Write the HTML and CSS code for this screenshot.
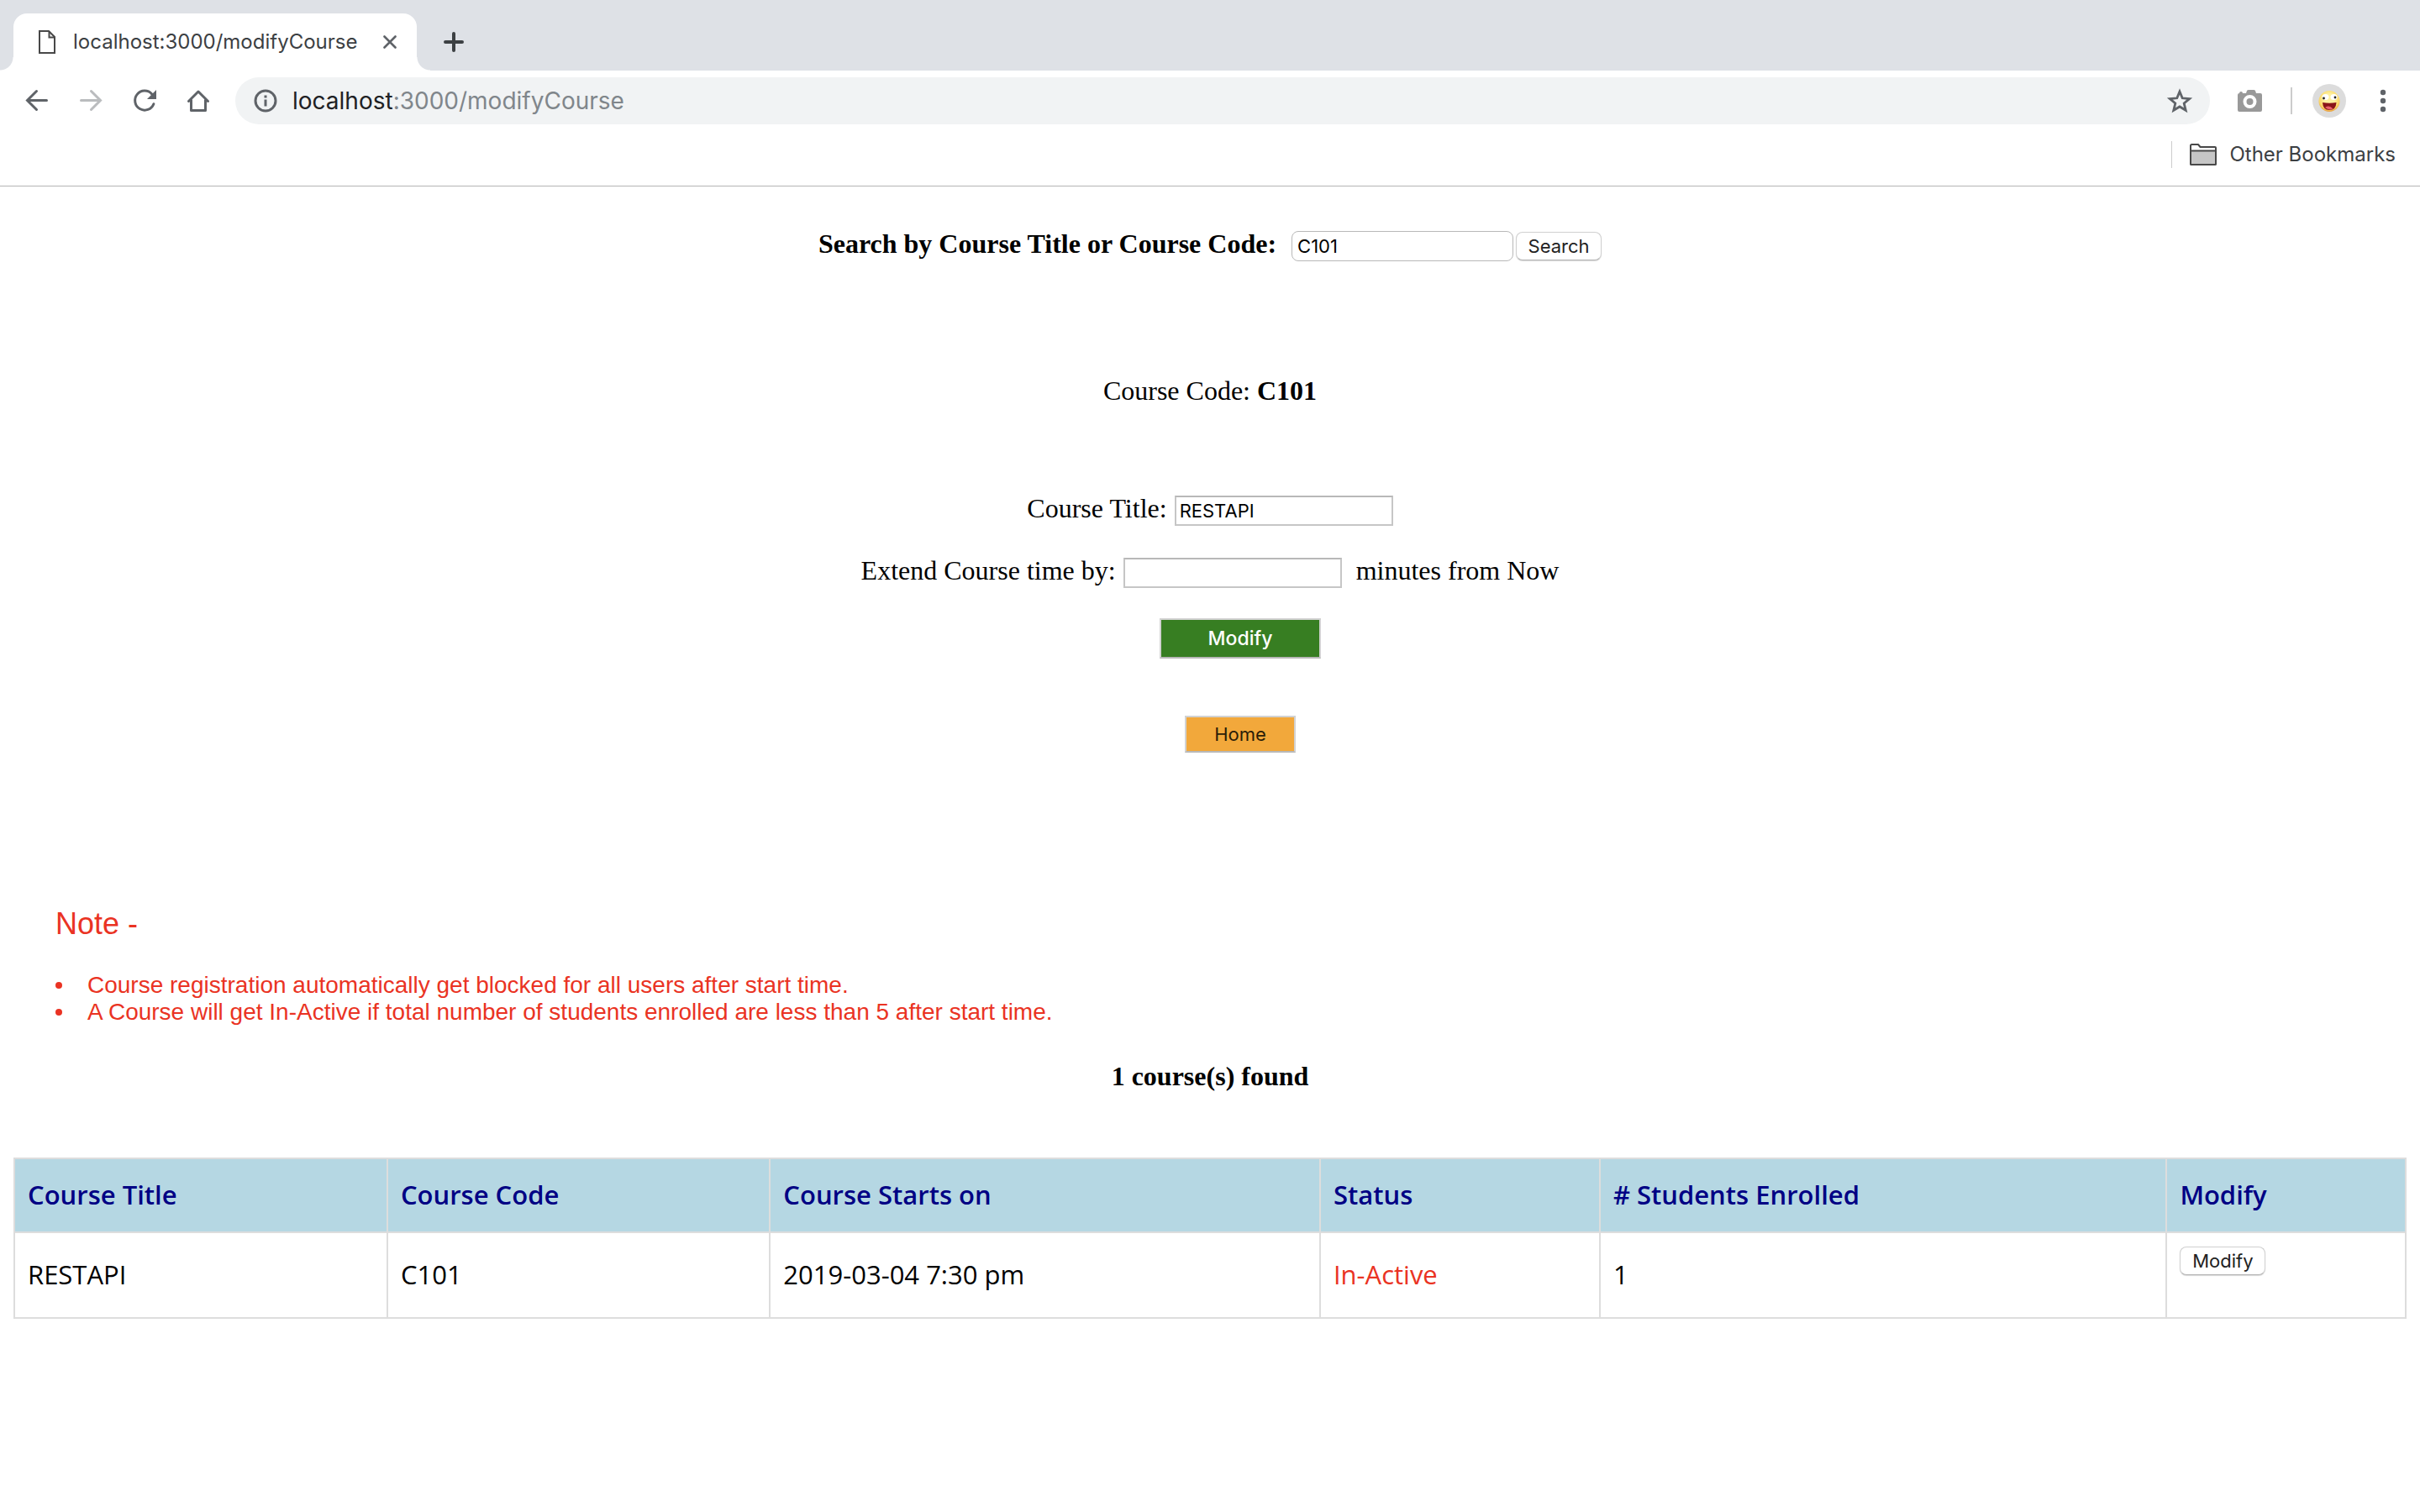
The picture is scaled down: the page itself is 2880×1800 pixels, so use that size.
FILE: index.html
```html
<!DOCTYPE html>
<html lang="en">
<head>
<meta charset="utf-8">
<meta name="viewport" content="width=device-width, initial-scale=1">
<title>localhost:3000/modifyCourse</title>
<link rel="stylesheet" href="styles.css">
</head>
<body>
<header class="browser">
  <div class="tab-strip">
    <div class="tab">
      <svg class="tab-icon" width="20" height="28" viewBox="0 0 20 28" fill="none" stroke="#484848" stroke-width="2"><path d="M1 1h11l7 7v19H1z"/><path d="M12.500 1v7.500H19"/></svg>
      <span class="tab-title">localhost:3000/modifyCourse</span>
      <button class="icon-button tab-close" aria-label="Close tab"><svg width="16" height="16" viewBox="0 0 16 16" stroke="#5f6368" stroke-width="2.600" stroke-linecap="round"><path d="M1.500 1.500l13 13M14.500 1.500l-13 13"/></svg></button>
    </div>
    <button class="icon-button new-tab" aria-label="New tab"><svg width="24" height="24" viewBox="0 0 24 24" stroke="#3c4043" stroke-width="4" stroke-linecap="round"><path d="M12 2v20M2 12h20"/></svg></button>
  </div>
  <nav class="toolbar">
    <button class="icon-button nav-button" aria-label="Back"><svg width="32" height="32" viewBox="0 0 32 32" fill="none" stroke="#5f6368" stroke-width="3" stroke-linecap="round"><path d="M27.500 15.500H5M15.500 4.500l-11 11 11 11"/></svg></button>
    <button class="icon-button nav-button" aria-label="Forward"><svg width="32" height="32" viewBox="0 0 32 32" fill="none" stroke="#babcbe" stroke-width="3" stroke-linecap="round"><path d="M4.500 15.500H27M16.500 4.500l11 11-11 11"/></svg></button>
    <button class="icon-button nav-button" aria-label="Reload"><svg width="32" height="32" viewBox="0 0 32 32"><path d="M26.900 19.700A11.500 11.500 0 1 1 24.700 7.900" fill="none" stroke="#5f6368" stroke-width="3" stroke-linecap="round"/><path d="M30 3v11H19z" fill="#5f6368"/></svg></button>
    <button class="icon-button nav-button" aria-label="Home page"><svg width="32" height="32" viewBox="0 0 32 32" fill="none" stroke="#5f6368" stroke-width="3" stroke-linecap="round" stroke-linejoin="round"><path d="M4.500 16.500L16 5l11.500 11.500M7.500 15v12.500h17V15"/></svg></button>
    <div class="address">
      <svg width="28" height="28" viewBox="0 0 28 28"><circle cx="14" cy="14" r="12" fill="none" stroke="#5f6368" stroke-width="3"/><path d="M12.500 7.500h3v3h-3zM12.500 12.500h3v8h-3z" fill="#5f6368"/></svg>
      <div class="url" role="textbox" aria-label="Address"><span class="url-host">localhost</span>:3000/modifyCourse</div>
      <button class="icon-button" aria-label="Bookmark this page"><svg width="32" height="32" viewBox="0 0 32 32" fill="none" stroke="#5f6368" stroke-width="2.800"><path d="M16 5l3.200 7.800 8.500.700-6.500 5.500 2 8.300L16 23l-7.200 4.300 2-8.300-6.500-5.500 8.500-.700z"/></svg></button>
    </div>
    <button class="icon-button camera" aria-label="Screenshot"><svg width="32" height="32" viewBox="0 0 32 32"><path d="M3 7q0-2 2-2t2 2h4l1-3q.500-1 2-1h6q1.500 0 2 1l1 3h5q2 0 2 2v18q0 2-2 2H3q-2 0-2-2V9q0-2 2-2z" fill="#999"/><circle cx="15.500" cy="17" r="6" fill="none" stroke="#fff" stroke-width="4"/></svg></button>
    <span class="divider"></span>
    <button class="icon-button avatar" aria-label="Profile"><svg width="40" height="40" viewBox="0 0 40 40"><defs><radialGradient id="face" cx=".5" cy=".4" r=".6"><stop offset=".4" stop-color="#fdf0a0"/><stop offset=".8" stop-color="#fbd869"/><stop offset="1" stop-color="#e89a3c"/></radialGradient></defs><circle cx="20" cy="20" r="20" fill="#dcdcdc"/><circle cx="20" cy="20.500" r="12.500" fill="url(#face)"/><ellipse cx="15.500" cy="15.500" rx="4" ry="3.500" fill="#fff"/><ellipse cx="25.500" cy="15.500" rx="4" ry="3.500" fill="#fff"/><circle cx="13.500" cy="17" r="1.400" fill="#222"/><circle cx="27" cy="16" r="1.400" fill="#222"/><path d="M12 22q8 1.500 16.500 0-.500 9-8.300 9T12 22z" fill="#8a1518"/><path d="M15 28q5-3.500 9.500 1.500-4.500 2.500-9.500-1.500z" fill="#e8606a"/></svg></button>
    <button class="icon-button" aria-label="Menu"><svg width="32" height="32" viewBox="0 0 32 32" fill="#5f6368"><circle cx="16" cy="6" r="3.200"/><circle cx="16" cy="16" r="3.200"/><circle cx="16" cy="26" r="3.200"/></svg></button>
  </nav>
  <div class="bookmarks">
    <a class="bookmark" href="#bookmarks">
      <svg width="32" height="26" viewBox="0 0 32 26" stroke="#484848" stroke-width="2" stroke-linejoin="round"><path d="M1 24V2.500Q1 1 2.500 1H10l2.500 3H30q1 0 1 1v19q0 1-1 1H2q-1 0-1-1z" fill="#fff"/><path d="M1 8.500h30V24q0 1-1 1H2q-1 0-1-1z" fill="#c6c6c6"/></svg>
      Other Bookmarks
    </a>
  </div>
</header>

<main class="page">
  <form class="row search-row">
    <label class="search-label" for="search">Search by Course Title or Course Code:</label>
    <div class="search-box">
      <input class="field field-rounded" id="search" type="text" value="C101">
      <button class="native-button" type="button">Search</button>
    </div>
  </form>

  <p class="course-code">Course Code: <b>C101</b></p>

  <form class="edit-form">
    <div class="row">
      <label for="title">Course Title:</label>
      <input class="field" id="title" type="text" value="RESTAPI">
    </div>
    <div class="row">
      <label for="extend">Extend Course time by:</label>
      <input class="field" id="extend" type="text">
      <span class="unit">minutes from Now</span>
    </div>
    <div class="actions">
      <button class="action modify" type="button">Modify</button>
      <button class="action home" type="button">Home</button>
    </div>
  </form>

  <section class="note">
    <h2 class="note-title">Note -</h2>
    <ul class="note-list">
      <li>Course registration automatically get blocked for all users after start time.</li>
      <li>A Course will get In-Active if total number of students enrolled are less than 5 after start time.</li>
    </ul>
  </section>

  <p class="found">1 course(s) found</p>

  <table class="courses">
    <colgroup>
      <col class="col-title"><col class="col-code"><col class="col-start"><col class="col-status"><col class="col-enrolled"><col class="col-modify">
    </colgroup>
    <thead>
      <tr><th>Course Title</th><th>Course Code</th><th>Course Starts on</th><th>Status</th><th># Students Enrolled</th><th>Modify</th></tr>
    </thead>
    <tbody>
      <tr><td>RESTAPI</td><td>C101</td><td>2019-03-04 7:30 pm</td><td class="inactive">In-Active</td><td>1</td><td class="modify-cell"><button class="native-button" type="button">Modify</button></td></tr>
    </tbody>
  </table>
</main>
</body>
</html>
```
FILE: styles.css
```css
* {
  box-sizing: border-box;
}

body {
  margin: 0;
  background: #fff;
  color: #000;
  font: 32px/36px "Liberation Serif", "Times New Roman", serif;
}

button,
input {
  margin: 0;
  font: 22px/26px Inter, sans-serif;
}

svg {
  display: block;
}

/* Browser window */

.browser {
  border-bottom: 1px solid #b4b4b4;
  color: #3c4043;
  font: 24px/32px Inter, sans-serif;
}

.icon-button {
  display: flex;
  align-items: center;
  justify-content: center;
  flex: none;
  padding: 0;
  border: 0;
  background: none;
}

.tab-strip {
  display: flex;
  align-items: center;
  height: 84px;
  padding: 16px 16px 0;
  background: #dee1e6;
}

.tab {
  position: relative;
  display: flex;
  align-items: center;
  width: 480px;
  height: 68px;
  padding: 0 24px 0 30px;
  border-radius: 16px 16px 0 0;
  background: #fff;
}

.tab::before,
.tab::after {
  content: "";
  position: absolute;
  bottom: 0;
  width: 16px;
  height: 16px;
}

.tab::before {
  right: 100%;
  background: radial-gradient(circle at 0 0, transparent 15px, #fff 16px);
}

.tab::after {
  left: 100%;
  background: radial-gradient(circle at 100% 0, transparent 15px, #fff 16px);
}

.tab-title {
  margin-left: 21px;
  white-space: nowrap;
}

.tab-close {
  margin-left: auto;
}

.new-tab {
  margin-left: 32px;
}

.toolbar {
  display: flex;
  align-items: center;
  padding: 8px 28px 0 12px;
}

.nav-button {
  width: 64px;
  height: 56px;
}

.address {
  display: flex;
  flex: 1;
  align-items: center;
  gap: 18px;
  height: 56px;
  margin-left: 12px;
  padding: 0 20px 0 22px;
  border-radius: 28px;
  background: #f1f3f4;
}

.url {
  flex: 1;
  color: #80868b;
  font-size: 28px;
}

.url-host {
  color: #202124;
}

.camera {
  margin: 0 32px;
}

.divider {
  width: 2px;
  height: 32px;
  background: #ccc;
}

.avatar {
  margin: 0 28px 0 24px;
}

.bookmarks {
  display: flex;
  justify-content: flex-end;
  padding: 20px 29px 21px;
}

.bookmark {
  display: flex;
  align-items: center;
  gap: 15px;
  padding-left: 21px;
  border-left: 1px solid #ccc;
  color: inherit;
  text-decoration: none;
}

/* Page */

.page {
  padding: 50px 16px 0;
}

.row {
  display: flex;
  align-items: baseline;
  justify-content: center;
  gap: 9px;
  height: 38px;
}

.search-label {
  font-weight: bold;
}

.search-row {
  gap: 18px;
}

.search-box {
  display: flex;
  align-items: baseline;
  gap: 3px;
}

.field {
  width: 260px;
  height: 36px;
  padding: 0 4px;
  border: 2px solid #c6c6c6;
  border-top-color: #b8b8b8;
  background: #fff;
  color: #000;
}

.field-rounded {
  width: 264px;
  padding: 0 6px;
  border-width: 1px;
  border-color: #b8b8b8;
  border-radius: 8px;
}

.native-button {
  width: 102px;
  height: 34px;
  padding: 0;
  border: 1px solid #d0d0d0;
  border-bottom-color: #b4b4b4;
  border-radius: 8px;
  background: #fff;
  box-shadow: 0 1px 1px #d8d8d8;
  color: #222;
}

.course-code {
  margin: 137px 0 104px;
  text-align: center;
}

.edit-form {
  display: flex;
  flex-direction: column;
  gap: 36px;
}

.unit {
  margin-left: 8px;
}

.actions {
  display: flex;
  flex-direction: column;
  align-items: center;
  gap: 68px;
  padding: 1px 0 0 72px;
}

.action {
  border: 2px solid #d2d2d2;
  border-bottom-color: #b8b8b8;
}

.modify {
  width: 192px;
  height: 48px;
  background: #377e22;
  color: #fff;
  font-size: 23px;
  font-weight: 500;
}

.home {
  width: 132px;
  height: 44px;
  background: #f2a83b;
  color: #2b1d08;
}

.note {
  margin-top: 183px;
  padding-left: 50px;
  color: #ea3323;
  font: 28px/32px "Liberation Sans", Arial, sans-serif;
}

.note-title {
  margin: 0 0 36px;
  font-size: 36px;
  font-weight: normal;
  line-height: 42px;
}

.note-list {
  margin: 0;
  padding: 0;
  list-style: none;
}

.note-list li {
  display: flex;
  align-items: center;
  gap: 30px;
}

.note-list li::before {
  content: "";
  flex: none;
  width: 8px;
  height: 8px;
  border-radius: 50%;
  background: currentColor;
}

.found {
  margin: 42px 0 79px;
  font-weight: bold;
  text-align: center;
}

.courses {
  width: 100%;
  table-layout: fixed;
  border-collapse: collapse;
  font: 31px/42px "Open Sans", "Trebuchet MS", sans-serif;
}

.col-title { width: 15.6%; }
.col-code { width: 16%; }
.col-start { width: 23%; }
.col-status { width: 11.7%; }
.col-enrolled { width: 23.7%; }
.col-modify { width: 10%; }

.courses th,
.courses td {
  padding: 0 15px 2px;
  border: 2px solid #ddd;
  text-align: left;
}

.courses th {
  height: 88px;
  background: #b5d7e3;
  color: #000084;
  font-weight: 600;
}

.courses td {
  height: 102px;
}

.courses .inactive {
  color: #ea3323;
}

.courses .modify-cell {
  padding-top: 16px;
  vertical-align: top;
}

.modify-cell .native-button {
  display: block;
}
```
